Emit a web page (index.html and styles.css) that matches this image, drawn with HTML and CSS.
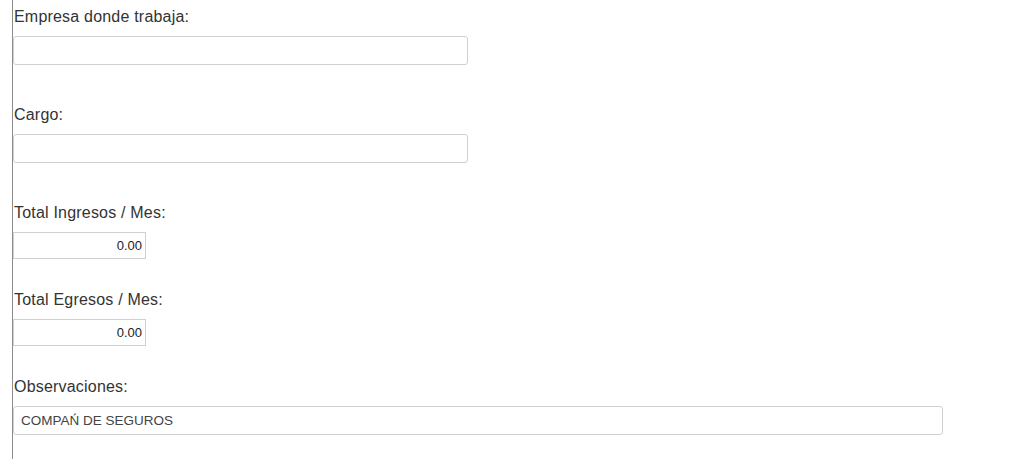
FILE: index.html
```html
<!DOCTYPE html>
<html lang="es">
<head>
  <meta charset="UTF-8">
  <title>Datos laborales</title>
  <link rel="stylesheet" href="styles.css">
</head>
<body>

  <div class="form-panel">
    <div class="field field-text">
      <label for="empresa">Empresa donde trabaja:</label>
      <input type="text" id="empresa" class="input-text">
    </div>

    <div class="field field-text">
      <label for="cargo">Cargo:</label>
      <input type="text" id="cargo" class="input-text">
    </div>

    <div class="field">
      <label for="ingresos">Total Ingresos / Mes:</label>
      <input type="text" id="ingresos" class="input-number" value="0.00">
    </div>

    <div class="field">
      <label for="egresos">Total Egresos / Mes:</label>
      <input type="text" id="egresos" class="input-number" value="0.00">
    </div>

    <div class="field">
      <label for="obs">Observaciones:</label>
      <input type="text" id="obs" class="input-wide" value="COMPAŃ DE SEGUROS">
    </div>
  </div>

</body>
</html>
```

FILE: styles.css
```css
body {
  font-family: "Liberation Sans", Arial, sans-serif;
  background-color: #fff;
  margin: 0;
  color: #333;
}

.form-panel {
  margin-left: 12px;
  border-left: 1px solid #8c8c8c;
  min-height: 100vh;
  padding-top: 7px;
  box-sizing: border-box;
}

.field {
  margin-bottom: 31px;
}

.field-text {
  margin-bottom: 40px;
}

.field label {
  display: block;
  font-size: 16px;
  letter-spacing: 0.2px;
  line-height: 20px;
  margin-bottom: 9px;
  padding-left: 1px;
}

.field input {
  display: block;
  box-sizing: border-box;
  font-family: "Liberation Sans", Arial, sans-serif;
  border: 1px solid #d0d0d0;
  background: #fff;
  margin: 0;
  outline: none;
}

.input-text {
  width: 455px;
  height: 29px;
  border-radius: 3px;
}

.input-number {
  width: 133px;
  height: 27px;
  font-size: 13px;
  text-align: right;
  padding: 0 3px;
  color: #222;
  border-color: #dcdcdc;
}

.input-wide {
  width: 930px;
  height: 29px;
  border-radius: 3px;
  font-size: 13.5px;
  padding: 0 7px;
  color: #444;
}
```
